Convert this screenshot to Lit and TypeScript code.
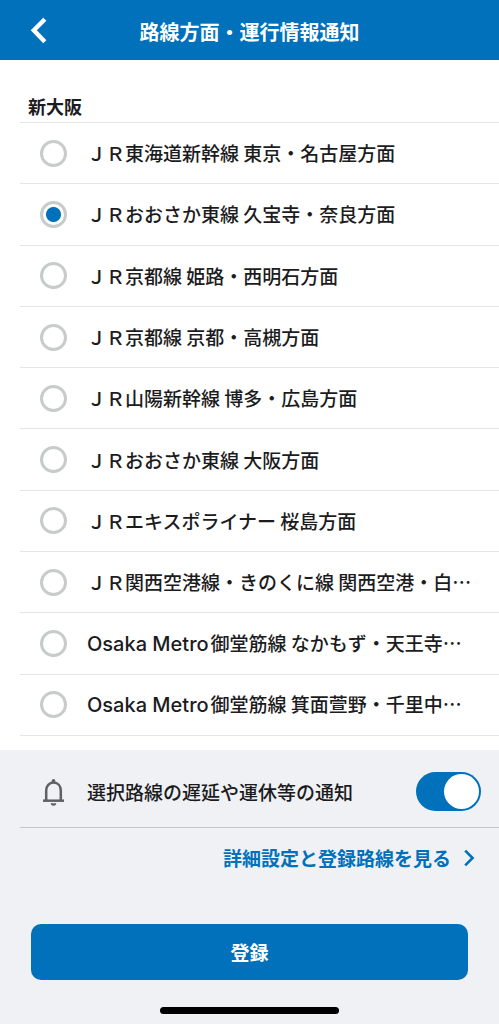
import { LitElement, html, css } from "lit";
import { customElement, state } from "lit/decorators.js";

interface Route {
  latin?: string;
  name: string;
}

const ROUTES: Route[] = [
  { name: "ＪＲ東海道新幹線 東京・名古屋方面" },
  { name: "ＪＲおおさか東線 久宝寺・奈良方面" },
  { name: "ＪＲ京都線 姫路・西明石方面" },
  { name: "ＪＲ京都線 京都・高槻方面" },
  { name: "ＪＲ山陽新幹線 博多・広島方面" },
  { name: "ＪＲおおさか東線 大阪方面" },
  { name: "ＪＲエキスポライナー 桜島方面" },
  { name: "ＪＲ関西空港線・きのくに線 関西空港・白…" },
  { latin: "Osaka Metro", name: "御堂筋線 なかもず・天王寺…" },
  { latin: "Osaka Metro", name: "御堂筋線 箕面萱野・千里中…" },
];

@customElement("app-root")
export class AppRoot extends LitElement {
  static styles = css`
    :host {
      --blue: #0071ba;
      --ink: #1c1c1e;
      display: flex;
      flex-direction: column;
      min-height: 100vh;
      background: #fff;
      color: var(--ink);
      font-family: "Noto Sans CJK JP", sans-serif;
      font-size: 19px;
      line-height: 28px;
    }
    * {
      box-sizing: border-box;
    }
    .bar {
      display: grid;
      grid-template-columns: 60px 1fr 60px;
      align-items: center;
      height: 60px;
      background: var(--blue);
      color: #fff;
    }
    .back {
      display: flex;
      justify-content: flex-end;
      height: 44px;
      padding: 8px 12px 0 0;
      border: 0;
      background: none;
      color: inherit;
    }
    .title {
      margin: 0;
      padding-top: 4px;
      text-align: center;
      font-size: 20px;
      font-weight: 700;
    }
    .routes {
      display: flex;
      flex: 1;
      flex-direction: column;
      min-width: 0;
      margin: 0;
      padding: 0 0 14px 20px;
      border: 0;
    }
    .station {
      margin: 0;
      padding: 32px 8px 2px;
      font-size: 18px;
      font-weight: 700;
    }
    .list {
      display: grid;
      flex: 1;
      grid-auto-rows: 1fr;
      margin: 0;
      padding: 0;
      border-top: 1px solid #e3e5e6;
      list-style: none;
    }
    .item {
      display: grid;
      min-width: 0;
      border-bottom: 1px solid #e3e5e6;
    }
    .route {
      display: flex;
      align-items: center;
      gap: 20px;
      min-width: 0;
      padding: 0 16px 0 20px;
    }
    .radio {
      flex: none;
      width: 27px;
      height: 27px;
      margin: 0;
      border: 3px solid #c8cbcb;
      border-radius: 50%;
      background: #fff;
      appearance: none;
    }
    .radio:checked {
      background: radial-gradient(circle, var(--blue) 7px, #fff 8px);
    }
    .name {
      overflow: hidden;
      font-weight: 500;
      white-space: nowrap;
      text-overflow: ellipsis;
    }
    .latin {
      margin-right: 2px;
      font-family: Inter, sans-serif;
      font-size: 20px;
      font-weight: 500;
    }
    .panel {
      display: flex;
      flex-direction: column;
      background: #eff1f5;
    }
    .notify {
      display: flex;
      align-items: center;
      height: 78px;
      margin-left: 20px;
      padding: 6px 18px 0 20px;
      border-bottom: 1px solid #c4c6c9;
    }
    .bell {
      flex: none;
      width: 27px;
      height: 28px;
      margin-right: 20px;
      color: #5e6266;
    }
    .caption {
      flex: 1;
      font-weight: 500;
    }
    .switch {
      display: flex;
      flex: none;
      justify-content: flex-end;
      width: 65px;
      height: 39px;
      margin: 0;
      padding: 2px;
      border-radius: 20px;
      background: var(--blue);
      appearance: none;
    }
    .switch::before {
      width: 35px;
      height: 35px;
      border-radius: 50%;
      background: #fff;
      content: "";
    }
    .switch:not(:checked) {
      justify-content: flex-start;
      background: #c5c8c8;
    }
    .more {
      display: flex;
      align-items: center;
      align-self: flex-end;
      gap: 12px;
      margin: 16px 24px 0;
      color: var(--blue);
      font-weight: 700;
      text-decoration: none;
    }
    .submit {
      height: 56px;
      margin: 52px 31px 27px;
      border: 0;
      border-radius: 10px;
      background: var(--blue);
      color: #fff;
      font: inherit;
      font-weight: 700;
    }
    .home {
      align-self: center;
      width: 36%;
      height: 7px;
      margin-bottom: 10px;
      border-radius: 4px;
      background: #000;
    }
  `;

  @state() private selected = 1;
  @state() private notify = true;

  render() {
    return html`
      <header class="bar">
        <button class="back" type="button" aria-label="戻る">
          <svg width="18" height="28" viewBox="0 0 18 28" fill="none" stroke="currentColor" stroke-width="4.4">
            <path d="M14.8 3.2 3.8 14.2l11 11.6" />
          </svg>
        </button>
        <h1 class="title">路線方面・運行情報通知</h1>
      </header>
      <main class="routes">
        <h2 class="station" id="station">新大阪</h2>
        <ul class="list" role="radiogroup" aria-labelledby="station">
          ${ROUTES.map(
            (route, i) => html`
              <li class="item">
                <label class="route">
                  <input
                    class="radio"
                    type="radio"
                    name="route"
                    .checked=${i === this.selected}
                    @change=${() => (this.selected = i)}
                  />
                  <span class="name"
                    >${route.latin ? html`<span class="latin">${route.latin}</span>` : ""}${route.name}</span
                  >
                </label>
              </li>
            `
          )}
        </ul>
      </main>
      <footer class="panel">
        <div class="notify">
          <svg class="bell" viewBox="0 0 27 28" fill="none" stroke="currentColor" stroke-width="2.5" aria-hidden="true">
            <path d="M6.2 22.5V12.5C6.2 7.8 9.2 4.6 13.5 4.6s7.3 3.2 7.3 7.9v10" />
            <path d="M3 22.7h21" />
            <path d="M11.7 4.5V2.8a1.8 1.8 0 0 1 3.6 0v1.7zM10.7 25.3h5.6a2.8 2.4 0 0 1-5.6 0z" fill="currentColor" stroke="none" />
          </svg>
          <label class="caption" for="notify">選択路線の遅延や運休等の通知</label>
          <input
            class="switch"
            id="notify"
            type="checkbox"
            role="switch"
            .checked=${this.notify}
            @change=${(e: Event) => (this.notify = (e.target as HTMLInputElement).checked)}
          />
        </div>
        <a class="more" href="#settings">
          詳細設定と登録路線を見る
          <svg width="12" height="18" viewBox="0 0 12 18" fill="none" stroke="currentColor" stroke-width="2.6">
            <path d="M2.2 1.6 9.6 9l-7.4 7.4" />
          </svg>
        </a>
        <button class="submit" type="button">登録</button>
        <div class="home"></div>
      </footer>
    `;
  }
}
